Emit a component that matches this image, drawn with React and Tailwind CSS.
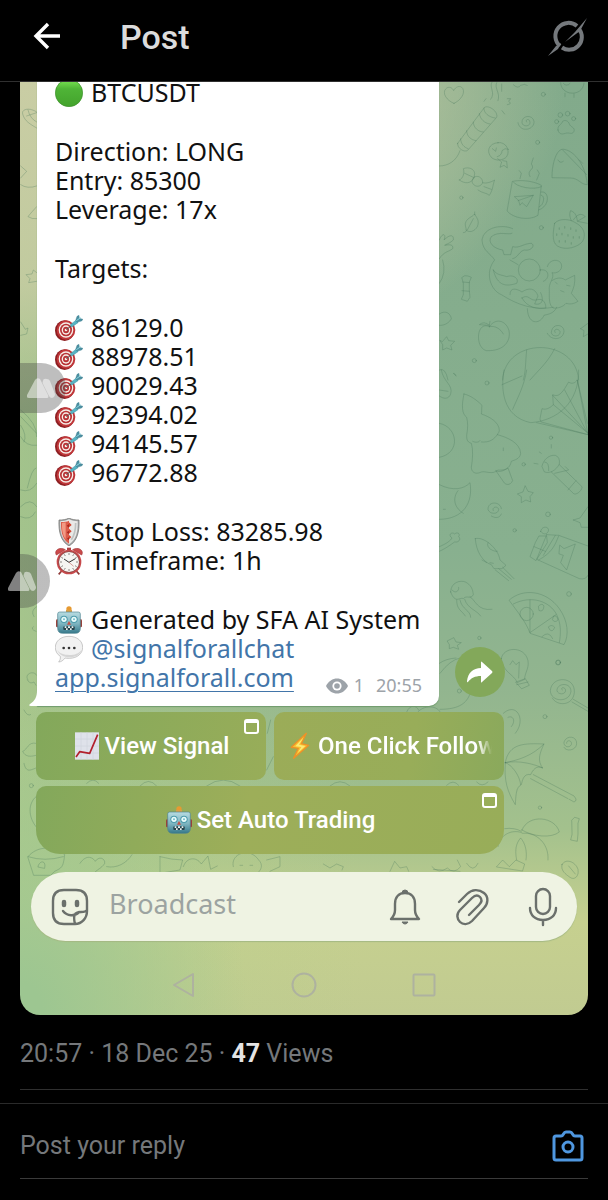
import { useState } from "react";

function GreenCircle() {
  return (
    <svg viewBox="0 0 84 84" className="size-7 shrink-0" aria-hidden="true">
      <defs>
        <linearGradient id="green" x1="0" y1="0" x2="0" y2="1">
          <stop offset="0" stopColor="#7ce854" />
          <stop offset="0.35" stopColor="#4fb437" />
          <stop offset="1" stopColor="#43a32c" />
        </linearGradient>
      </defs>
      <circle cx="42" cy="42" r="41" fill="url(#green)" stroke="#3d8f2b" strokeWidth="2" />
    </svg>
  );
}

function Dart() {
  return (
    <svg viewBox="0 0 84 84" className="size-7 shrink-0" aria-hidden="true">
      <ellipse cx="29" cy="50" rx="29" ry="31" fill="#8e1f22" />
      <ellipse cx="33" cy="48" rx="28" ry="29" fill="#c0373a" />
      <ellipse cx="33" cy="48" rx="22" ry="23" fill="#f7efe9" />
      <ellipse cx="33" cy="48" rx="18" ry="19" fill="#b93336" />
      <ellipse cx="33" cy="48" rx="13" ry="14" fill="#f7efe9" />
      <ellipse cx="33" cy="48" rx="9" ry="10" fill="#b93336" />
      <circle cx="33" cy="48" r="4" fill="#f7efe9" />
      <path d="M34 47 52 33" stroke="#555" strokeWidth="3" />
      <path d="M46 32 64 18l5 8-19 13z" fill="#58b4c4" stroke="#3990a2" strokeWidth="1.5" />
      <path d="M62 19 66 7l6-3 1 9 11 3-4 5-14 4z" fill="#4d8fa2" stroke="#347b8d" />
      <path d="m64 20 13-9" stroke="#8bd9e2" strokeWidth="3" />
    </svg>
  );
}

function Shield() {
  return (
    <svg viewBox="0 0 84 84" className="size-7 shrink-0" aria-hidden="true">
      <path d="M12 6c12 0 21-1 30-6 9 5 18 6 30 6 2 36-6 64-30 78C18 70 10 42 12 6z" fill="#a6a9aa" />
      <path d="M16 10c11 0 18-2 26-6 8 4 15 6 26 6 1 32-5 56-26 69C21 66 15 42 16 10z" fill="#e9e9e7" />
      <path d="M18 12c10 0 17-1 24-4v69C23 65 17 42 18 12z" fill="#dc5c4a" />
      <path d="M21 15c6 0 8-1 11-2v50C23 52 20 35 21 15z" fill="#f29a84" />
      <path d="M42 13l8 8-8 7zM42 32l8 8-8 7zM42 51l7 6-7 7z" fill="#d2442f" />
      <path d="M42 18l-7 5 7 6zM42 38l-7 5 7 6zM42 57l-6 5 6 5z" fill="#a92a20" />
      <path d="M62 15c0 22-5 39-13 50" fill="none" stroke="#bfc3c2" strokeWidth="5" />
      <path d="M12 6c12 0 21-1 30-6 9 5 18 6 30 6 2 36-6 64-30 78C18 70 10 42 12 6z" fill="none" stroke="#6d6b68" strokeWidth="2" />
    </svg>
  );
}

function AlarmClock() {
  return (
    <svg viewBox="0 0 84 84" className="size-7 shrink-0" aria-hidden="true">
      <path d="m20 72-9 10M64 72l9 10" stroke="#8f3a38" strokeWidth="5" />
      <path d="M4 24C-4 10 14-2 31 8zM80 24C88 10 70-2 53 8z" fill="#cb4a4b" stroke="#a23638" strokeWidth="2" />
      <path d="M36 2h12v8H36z" fill="#ae4041" />
      <circle cx="42" cy="45" r="37" fill="#c7494b" />
      <circle cx="42" cy="45" r="32" fill="#8d4a48" />
      <circle cx="42" cy="45" r="30" fill="#f6f5f2" />
      <path d="M42 18v6M42 66v6M15 45h6M63 45h6M28 22l3 5M56 22l-3 5M28 68l3-5M56 68l-3-5M19 31l5 3M65 31l-5 3M19 59l5-3M65 59l-5-3" stroke="#55504d" strokeWidth="2" />
      <path d="M27 36l15 10 19-11" fill="none" stroke="#333" strokeWidth="3" />
      <path d="m42 46 14 12" stroke="#b5433c" strokeWidth="1.5" />
    </svg>
  );
}

function Robot() {
  return (
    <svg viewBox="0 0 84 84" className="size-7 shrink-0" aria-hidden="true">
      <defs>
        <linearGradient id="robot" x1="0" y1="0" x2="0" y2="1">
          <stop offset="0" stopColor="#b7dce2" />
          <stop offset="0.55" stopColor="#7db4c0" />
          <stop offset="1" stopColor="#35788a" />
        </linearGradient>
      </defs>
      <circle cx="42" cy="9" r="8" fill="#e69a32" />
      <path d="M33 12h18v7H33z" fill="#d8a04a" />
      <rect x="3" y="40" width="9" height="24" rx="4" fill="#96423b" />
      <rect x="72" y="40" width="9" height="24" rx="4" fill="#96423b" />
      <path d="M14 18h56q6 0 6 6v43q0 15-15 15H23Q8 82 8 67V24q0-6 6-6z" fill="url(#robot)" stroke="#4f8390" strokeWidth="2" />
      <circle cx="27" cy="40" r="11" fill="#4c9aab" />
      <circle cx="57" cy="40" r="11" fill="#4c9aab" />
      <circle cx="27" cy="40" r="8" fill="#e9fbfb" />
      <circle cx="57" cy="40" r="8" fill="#e9fbfb" />
      <circle cx="27" cy="40" r="3" fill="#74bfcb" />
      <circle cx="57" cy="40" r="3" fill="#74bfcb" />
      <path d="m42 45 6 11H36z" fill="#c64e43" />
      <rect x="25" y="61" width="34" height="11" rx="3" fill="#24434c" />
      <path d="M29 61h5v5h-5zM39 61h6v5h-6zM50 61h5v5h-5zM33 67h5v5h-5zM45 67h5v5h-5z" fill="#eef4f3" />
    </svg>
  );
}

function SpeechBubble() {
  return (
    <svg viewBox="0 0 84 84" className="size-7 shrink-0" aria-hidden="true">
      <path d="M42 4c24 0 41 14 41 33S66 70 43 70c-6 0-9 0-13-1-5 7-12 12-19 12 4-5 6-10 5-17C6 58 1 48 1 37 1 18 18 4 42 4z" fill="#f1f1f1" stroke="#b0b0b0" strokeWidth="2" />
      <path d="M7 46c6 14 20 21 36 21 19 0 33-8 37-22-9 11-20 15-37 15S15 56 7 46z" fill="#d5d5d5" />
      <circle cx="26" cy="39" r="4" fill="#333" />
      <circle cx="42" cy="39" r="4" fill="#333" />
      <circle cx="58" cy="39" r="4" fill="#333" />
    </svg>
  );
}

function Chart() {
  return (
    <svg viewBox="0 0 84 84" className="size-7 shrink-0" aria-hidden="true">
      <path d="M6 1h72v82H6z" fill="#dfe2ea" />
      <path d="M24 1v82M42 1v82M60 1v82M6 21h72M6 42h72M6 63h72" stroke="#d0d4dd" strokeWidth="2" />
      <path d="m9 75 11-16 30 5L74 8" fill="none" stroke="#b2202c" strokeWidth="5" strokeLinejoin="round" />
    </svg>
  );
}

function Bolt() {
  return (
    <svg viewBox="0 0 84 84" className="size-7 shrink-0" aria-hidden="true">
      <path d="M61 4 16 46l21 3-14 30 45-39-22-5z" fill="#f7c331" stroke="#ee9128" strokeWidth="4" strokeLinejoin="round" />
      <path d="M52 17 28 43l18 2-11 18 23-21-19-4z" fill="#fdea76" />
    </svg>
  );
}

function WindowMark() {
  return (
    <svg viewBox="0 0 15 15" className="absolute right-[7px] top-[7px] size-[15px]" aria-hidden="true">
      <rect x="1" y="1" width="13" height="13" rx="2" fill="none" stroke="#fff" strokeWidth="2" />
      <path d="M1 1h13v3H1z" fill="#fff" />
    </svg>
  );
}

function Peaks() {
  return (
    <svg viewBox="0 0 28 20" className="h-5 w-7 shrink-0" fill="#fff" fillOpacity="0.5" aria-hidden="true">
      <path d="M8 2q2-3 5-1l8 16q1 3-1 3H2q-3 0-2-3z" />
      <path d="M16 3q0-3 4-2 2 0 3 2l5 13q0 3-3 4-2 0-3-2L16 6q-1-2 0-3z" />
    </svg>
  );
}

// Line art of the chat wallpaper, one group per area
function Doodles() {
  return (
    <svg
      viewBox="20 82 568 933"
      preserveAspectRatio="xMaxYMin slice"
      className="absolute inset-0 size-full"
      fill="none"
      stroke="#47775a"
      strokeOpacity="0.3"
      strokeWidth="3"
      strokeLinecap="round"
      strokeLinejoin="round"
      aria-hidden="true"
    >
      <g transform="translate(430 80) scale(0.3333)">
        <path d="M72 70C50 62 36 40 47 27c9-10 20-4 24 5 6-13 20-17 27-7 9 15-7 37-26 45z" />
        <path d="M83 190 162 84c8-12 44 8 38 28l-86 98c-10 10-34-6-31-20zM162 84c-2 14 14 28 34 30M148 100c2 18 16 30 32 32M130 126c0 18 16 30 30 30M110 152c0 18 14 28 28 30M92 176c0 16 10 26 22 30M90 212c-10 30-34 46-62 46" />
        <path d="M186 6c-10 16 12 32-4 52M200 8c-8 18 12 30 4 54M168 56l-6 8M232 56h10l-6 8q12 8-4 10M216 92l8 10M215 12l0 22M250 14q14 14 22 2 12-6 20 0" />
        <path d="M290 126c-6-8 8-12 10 0 2 14-22 16-24 2-2-22 32-26 36-4 2 26-42 36-48 4" />
        <path d="M384 150c-2-16 10-14 14-26 8-6 18 0 20 8 4 10 18 10 14 22-6 12-14 2-26 6-10 4-20 2-22-10z" />
        <circle cx="380" cy="125" r="6" /><circle cx="391" cy="105" r="7" /><circle cx="413" cy="101" r="7" /><circle cx="431" cy="116" r="6" />
        <circle cx="340" cy="43" r="6" /><circle cx="323" cy="187" r="6" /><circle cx="94" cy="353" r="5" /><circle cx="334" cy="443" r="6" /><circle cx="133" cy="842" r="6" />
        <path d="M392 8c0 40 66 44 70 2M405 40v10M432 42v10M400 10q10 12 20 0" />
        <path d="M204 188c24-4 38 24 26 42-10 12-34 14-46 2-16-18-8-42 20-44zM203 236l12 10-5 16 12-6 10 8-2-20-12-2M187 206l10 8 2-10M202 230q14-4 14-18 8-10 20-4" />
        <path d="M366 292c0-40 12-80 30-84 30-2 70 40 76 106-20 0-26-20-50-20zM398 210l72 74M384 240q6 12 16 4M448 240l10 10" />
        <path d="M88 300c12-4 16-22 12-34 16-6 32 0 34 14l-2 14c-10 18-28 18-44 6zM132 292c10-8 26 0 26 16-4 10-16 14-24 8-10-6-10-18-2-24zM158 308c10 4 26-2 36-8-6 14-4 28-16 46-8-8-22-6-34-16M104 280l26 12M162 320l22 8" />
        <path d="M248 304c26-6 66 0 86 12l-10 90c-28 18-76 8-92-12zM250 306c8 14 60 26 84 14M334 336c26-4 26 44-8 54M334 346c12 0 8 30-6 34M270 296l4-16-6-8M300 290c-12-22 18-20 4-38l6-18M320 300l8-20-6-10" />
        <path d="M254 350l56-4-20 34-14-12-6 8-4-14zM310 346l-46 16" />
        <path d="M100 458c18-2 4-14 6-28 4-16 20-18 28-28 4 10 16 18 8 38-8 14-24 20-34 10M130 416l-18 34M134 404v-8" />
        <path d="M374 430c12-16 44-14 62-2 24 12 34 34 22 56-12 16-50 30-76 14-18-12-12-48-8-68zM424 422c-8-18-4-24-2-30 16 6 18 18 20 30M430 420c12-18 24-22 36-10l-24 14 30 6" />
        <path d="M388 444v4M404 440v4M422 444v4M438 450v4M380 462v4M396 460v4M414 464v4M430 470v4M448 470v4M388 482v4M406 482v4M424 488v4" strokeWidth="4" />
        <path d="M246 460c-10 6-40-8-62 10-12 16 6 36 34 40l4 14 20 0 6-24c20 6 34-10 56-10 14 8-4 24-20 20-16 2-20 24-36 26M248 446c-30-14-86-6-92 34 2 34 26 40 38 60-30 36-14 90 20 104 50 32 100 48 156 38" />
        <circle cx="298" cy="570" r="33" />
        <path d="M190 570c10 16 24 14 40 20 22-8 38 8 30 20-30 10-58 10-70-40zM240 644c0-24 20-18 36-8 20-14 40-12 48 12l-10 24c20 4 30-8 18-34M240 540l24 14M276 654c20-14 24 10 42 6 20-6 28 4 30 24-24 4-56 0-72-30zM292 686c2 52 40 46 50 20 16-4 30-6 38-24M352 560c6-24 36-24 42-8 6 20-16 30-28 26 10 16-12 30-8 54 0 20-2 44 12 52 14 2 30-4 38-14 12 4 24 2 36-6l-20-24c8-18 12-30 10-54l-28 14c-14-10-28-6-40 2M376 606l6 6M392 632l10 4M410 616l10 2M330 570c30-6 30 28 10 34" />
        <path d="M178 740c-40-20-44 66-8 72 54 2 70-30 68-54-4-32-38-50-60-18zM178 740c16-4 34 6 42 22M178 736l-30-2q14-12 30 2l2-12" />
        <path d="M376 758c-8-8 6-16 14-4 2 18-24 18-26 4 2-30 38-26 38-4-2 26-38 30-50 6" />
        <path d="M38 784l12-14 6 12 18 2-12 12 4 14-16-6-12 6v-16l-8-12zM452 746l22-16M452 746l10 6-2 18 14-8" />
        <path d="M218 900c6-130 220-130 228 0M290 810c-4 40-2 60-10 90M374 806c-20 40-44 60-74 94" />
        <path d="M96 592q8-8 18-4l10 4-6 14v26l2 20-8 12-18-6 6-14 0-34zM98 606l20 2M96 632l22 2" />
        <path d="M28 480c10-26 22-16 14 0 18-18 30-16 28 0-10 10-20 12-26 16 20-4 26 0 24 10-12 10-26 8-40 30M38 540q12 40-10 70M28 702c20-14 34 0 36 14-4 10-20 22-36 20" />
        <path d="M28 870q18-10 26 30M70 880l8 6" />
      </g>
      <g transform="translate(430 370) scale(0.3333)">
        <path d="M222 0c-10 54-6 140 80 158 80-6 146-60 144-158M290 0c-8 50-26 80-42 118M216 44l60-26M330 146l6-30c10 4 22 0 34-12l-2-30c14 6 22 2 36-18l12-20c10 8 20 2 26-6l32 164-140-38zM370 104l104 86M368 76l106 114M404 60l66 124M442 30l30 130M320 158l154 36" />
        <path d="M102 72c20 4 40 20 54 34-2 12 0 20-2 26 24 8 54 24 54 50-2 10-6 8-6 12 30 8 68 24 70 56-2 18-20 20-28 24-4 24-24 28-40 26-18 16-36 2-50 6-20 10-30-2-30-14 4-24 6-54 0-72-14-4-14-14-14-24 4-24 4-36 0-54-14-10-16-34-8-70zM128 214c8 4 18 4 22-2M154 216c26 2 38-8 48-22" />
        <path d="M198 302c12 8 30-4 36-8l14 38c-8 16-20 12-24 8zM220 234v8" />
        <path d="M336 288c4-18 20-34 40-32 10 4 14 12 12 26-10 20-30 30-44 24zM344 276q14 0 12 26M388 284l68 66c2 8-12 24-24 22l-68-66M406 290l10 10-42 10M438 332l-24 28M328 246l6 4M364 224v10M312 280l12 2" />
        <path d="M286 348l8 16 16 4-10 12 2 16-14-6-14 8v-18l-12-8 16-6z" />
        <path d="M190 422c-6-10 12-16 16-4 0 16-28 16-32 0 0-26 38-24 40-2M184 438c12 8 26 6 30-6" />
        <path d="M28 344c40 20 74 14 92-6 10 60-20 110-92 110M84 362c-16 20-14 50 16 68M40 418h6" />
        <path d="M28 160c56 10 66 90 0 102M34 0c6 36 36 44 28 72-6 16-20 16-34 6M28 60l26 4M72 10l6 8" />
        <path d="M28 530c20-8 34-18 38-26-14-10 0-20 8-12 8-8 18 0 12 8 8 8 0 18-12 16-10 6-20 16-46 28" />
        <path d="M136 506c22-8 68 26 74 64l18 16-12 10-24 0-8-12c-26-8-46-40-48-78zM174 518c-8 16 18 28 28 26M156 570l14 8M180 578l10 2M196 600l40 32M206 596l38 32M218 592l34 34" />
        <path d="M350 494l36 2 88 32M350 494l-30 74 128 58q20 4 26-10M386 498c-12 30-20 50-60 72M376 496l-36 60M328 498l22 0 2 20-34 54-18-12 16-42zM312 530l34 14M332 484c4-20 30-14 22 2-6 8-14 8-22-2zM390 526l12 10 34-14-26 78-18-22 8-22-12-4z" />
        <path d="M62 666c0-30 30-36 44-30 16 8 22 20 24 38-8 16-20 0-30 12-10-6-24 18-38-20zM66 660c10 12 22 4 20-8M80 690c0 30 14 30 26 48M90 690c6 30 32 30 32 52M104 688c8 28 36 32 48 50M120 680c16 10 22 44 66 38" />
        <path d="M238 690c40-36 110-30 150 26 26 36 30 80 14 108l-102-34c-10-30-34-60-50-82zM250 702c54-28 110-8 130 32 12 24 14 52 8 84M300 690v98l78-54" />
        <circle cx="290" cy="732" r="20" /><path d="M326 708q10-10 16 0-2 20-14 14zM356 770q10-8 18 2-6 16-14 8zM372 738q10-2 12 12-10 10-16 0zM336 800q20-20 32 6" />
        <path d="M72 804l6 12 16 2-12 8 4 12-16-6-12 4 0-12-6-10zM28 880q20-14 50-16" />
        <circle cx="171" cy="39" r="6" /><circle cx="363" cy="203" r="5" /><circle cx="281" cy="283" r="5" /><circle cx="354" cy="433" r="7" /><circle cx="254" cy="481" r="5" /><circle cx="417" cy="672" r="7" /><circle cx="148" cy="804" r="5" /><circle cx="385" cy="877" r="7" />
        <path d="M430 450l20-6 24-34M430 450l20 8 4 14 20 0" />
      </g>
      <g transform="translate(300 600) scale(0.3333)">
        <path d="M604 176c4-36 70-40 80 6 4 24-10 36-10 56l-22 10c-10-26-44-30-48-72zM630 194l8-12 10 12 10-8-2 48M648 246l28-10 12 20-22 10zM650 254l34-8" />
        <path d="M787 270c-8-6 6-12 10 0 0 16-24 14-26 2 0-24 42-26 42 2-4 34-60 34-62-2 4-46 76-44 72 6-4 40-52 42-66 16M820 298l44 26M816 306l48 28" />
        <path d="M800 430c-2-12 18-10 14 4-6 12-24 6-22-8 8-22 40-18 38 6-2 20-32 24-38 10M610 340c40-36 70 20 36 60M624 352c16-8 24 12 10 28" />
        <path d="M616 488c10-60 60-58 116-56-14 30-20 50-4 72-20-10-30 8-36 20-20-4-24 14-28 30-16 8-16 30-18 60-24-40-34-70-30-126zM616 488c40-8 80-20 116-56M616 488c40-8 86 4 112 16M616 488c20 6 44 40 46 66M700 524l122 64q12 14 0 18l-14-8M692 536l112 60" />
        <path d="M666 690c20-50 100-40 112 6-24 20-80 14-112-6zM594 740c10-50 60-50 74-40 40-4 80 30 76 80M650 780c-6-30-2-50 12-66 14 16 20 40 16 66M614 686q30-4 50 8M816 660l8-8 14 4-4 14v32l-2 22-20-4 4-16z" />
        <path d="M420 220q30-40 60-46M420 328c60 0 80-20 90-46M350 340c20-28 66-24 72 0M320 336c10-24 30-20 36-6M90 558q30-26 60 0M440 556q20-20 36 0M530 546q16 18 34 0" />
        <circle cx="774" cy="188" r="7" /><circle cx="735" cy="350" r="6" /><circle cx="720" cy="623" r="5" /><circle cx="478" cy="273" r="6" />
      </g>
      <g transform="translate(20 700) scale(0.3333)">
        <path d="M12 30q10 20 20 14M48 130c-24-6-26 20-40 24 8 18 24 16 40 12M12 190c6 30 20 20 36 14M48 290c-24 20-24 60 0 90M24 470c30-36 80-30 110-6-4 40-10 40-30 50l-12 12H42zM24 470q50 16 106 0M54 500c4-20 26-20 20 4zM180 490c20-30 40-16 46-6 10-16 30-10 28 6-8 16-30 20-40 40M260 500c30 6 60-10 76-36M420 470v50l60-10 8-30q-30 0-68-10M490 500c10-30 40-30 54-8l20-24 8 40 20-10M640 500c-10-40 50-60 76-20 14 14 8 28 0 36M660 496h8M690 496h8M740 480l40-10 0 30-30 14M200 250q20-20 36 0M360 258q26-28 50 0M560 258q50-36 100 0M760 170l-20 40M752 60l-10 40" />
        <circle cx="34" cy="257" r="6" />
      </g>
      <g transform="translate(300 860) scale(0.3333)">
        <path d="M70 12l20 12 20-12 20 8-4 10M270 34l14-30 16 20 20-4 6 14M396 20q20 24 46 4 20 20 40-4l-10-20M400 28l80 6M500 10q20 30 34 0M590 20l18-20 20 20 20-20 26 12-6 20zM786 14c10-20 40-10 48 14 4 20-10 34-24 24s-28-20-24-38zM806 18l20 24" />
      </g>
      <g transform="translate(0 80) scale(0.3333)">
        <path d="M110 96c-20-14-46-10-42 6 6 22 22 30 42 42M80 108l30-10M84 90q6 26 26 36M62 258l18 16-18 20M62 314q20 14 48 4M110 380q-20 22-26 30 12 8 26 6M110 578l-10-8-4 12-18 2 12 12-4 12 24-4" />
      </g>
      <g transform="translate(0 300) scale(0.3333)">
        <path d="M62 66l14 22 8-4-4 18-18 4M62 330q50 40 48 80M62 350l48 50M62 410q16 30 48 26M62 376q20 30 10 50M108 504q-12 0-26 60M62 570q30 10 48-20" />
      </g>
      <g transform="translate(0 500) scale(0.3333)">
        <path d="M62 20q30-30 48 0M62 50q30 14 44-14M110 320q-20 12-8 30M100 380q-10 8 8 14M84 540c-14-20 20-30 26-14M82 540q8 14 20 6l6 10" />
      </g>
    </svg>
  );
}

const targets = ["86129.0", "88978.51", "90029.43", "92394.02", "94145.57", "96772.88"];

function Line({ icon, children }) {
  return (
    <p className="flex items-end gap-2">
      {icon}
      <span>{children}</span>
    </p>
  );
}

export default function App() {
  const [message, setMessage] = useState("");
  const [reply, setReply] = useState("");

  return (
    <div className="min-h-[1200px] bg-black font-['Roboto',sans-serif]">
      <header className="flex h-[82px] items-center border-b border-[#303030] px-5 pb-2">
        <button aria-label="Back" className="ml-3 w-[88px]">
          <svg viewBox="0 0 30 30" className="size-[30px]" fill="none" stroke="#fff" strokeWidth="3.4">
            <path d="M28 14H4M16 2 4 14l12 12" />
          </svg>
        </button>
        <h1 className="text-[34px] leading-10 font-medium text-[#dcdcdc]">Post</h1>
        <button aria-label="Grok" className="ml-auto">
          <svg viewBox="0 0 40 38" className="h-[38px] w-10" fill="none" stroke="#75797d" strokeWidth="4">
            <path d="M12 28A12.7 12.7 0 0 1 29 8M31 11A12.7 12.7 0 0 1 14 29.500" />
            <path d="M39 0 32 13 17 24 27 14zM13 25l-3 6L0 38l8-10z" fill="#75797d" stroke="none" />
          </svg>
        </button>
      </header>

      <div className="relative mx-5">
        <section className="relative overflow-hidden rounded-b-[20px] bg-[radial-gradient(40%_34%_at_0%_100%,#9dc691_10%,#9dc69100_100%),radial-gradient(96%_36%_at_0%_0%,#c9cda4_0%,#c9cda4cc_60%,#c9cda400_100%),linear-gradient(90deg,#b5d08a99_0%,#b5d08a00_60%),linear-gradient(180deg,#82aa8b_0%,#88b08f_50%,#92b58f_65%,#a3c18d_80%,#c6d08f_90%,#c1cb91_100%)]">
          <Doodles />

          <div className="relative flex items-end gap-4 pl-[17px]">
            <article className="relative -mt-1 flex w-[402px] flex-col gap-[30px] rounded-br-[10px] bg-white pb-[14px] pl-[18px] pr-[17px] font-['Noto_Sans',sans-serif] text-[25px] leading-[29px] text-[#111] shadow-[0_1px_1px_#6f9b6c]">
              <Line icon={<GreenCircle />}>BTCUSDT</Line>
              <div>
                <p>Direction: LONG</p>
                <p>Entry: 85300</p>
                <p>Leverage: 17x</p>
              </div>
              <p>Targets:</p>
              <div>
                {targets.map((t) => (
                  <Line key={t} icon={<Dart />}>{t}</Line>
                ))}
              </div>
              <div>
                <Line icon={<Shield />}>Stop Loss: 83285.98</Line>
                <Line icon={<AlarmClock />}>Timeframe: 1h</Line>
              </div>
              <div>
                <Line icon={<Robot />}>Generated by SFA AI System</Line>
                <Line icon={<SpeechBubble />}>
                  <a href="#chat" className="text-[#4275a9]">@signalforallchat</a>
                </Line>
                <div className="flex items-end justify-between">
                  <a href="#app" className="text-[#4275a9] underline decoration-1 underline-offset-4">app.signalforall.com</a>
                  <p className="-mb-2 flex items-center text-[18px] text-[#9da3a9]">
                    <svg viewBox="0 0 22 16" className="mr-[6px] h-4 w-[22px]" aria-hidden="true">
                      <path d="M0 8C5-2 17-2 22 8 17 18 5 18 0 8z" fill="#9da3a9" />
                      <circle cx="11" cy="8" r="4.6" fill="#fff" />
                      <circle cx="11" cy="8" r="2.8" fill="#9da3a9" />
                    </svg>
                    <span className="mr-3">1</span>
                    <time>20:55</time>
                  </p>
                </div>
              </div>
              <svg viewBox="0 0 9 16" className="absolute -left-2 bottom-0 h-4 w-[9px]" fill="#fff" aria-hidden="true">
                <path d="M9 0H8C8 7 6 11 1 14q-2 2 1 2h7z" />
              </svg>
            </article>
            <button aria-label="Share" className="mb-[9px] flex size-[50px] items-center justify-center rounded-full bg-[#83a85a]">
              <svg viewBox="0 0 26 22" className="h-[22px] w-[26px]" fill="#fff">
                <path d="M14 1q0-1 1 0l10 9q1 1 0 2l-10 9q-1 1-1 0v-6C8 15 4 17 1 21q-1 1-1-1C1 12 6 7 14 7z" />
              </svg>
            </button>
          </div>

          <div className="relative ml-4 mt-[6px] grid w-[468px] grid-cols-2 gap-x-2 gap-y-[6px] text-[24px] font-medium text-white">
            <button className="relative flex h-[68px] items-center justify-center gap-1 rounded-[10px] bg-[linear-gradient(100deg,#83a85b,#98ad59)]">
              <Chart />
              View Signal
              <WindowMark />
            </button>
            <button className="flex h-[68px] items-center gap-1 overflow-hidden rounded-[10px] bg-[linear-gradient(100deg,#9bac58,#98ad59_60%,#8aa95c)] pl-3 pr-[12px]">
              <Bolt />
              <span className="overflow-hidden whitespace-nowrap [mask-image:linear-gradient(90deg,#000_92%,transparent)]">One Click Follow</span>
            </button>
            <button className="relative col-span-2 flex h-[68px] items-center justify-center gap-1 rounded-[10px] rounded-b-[24px] bg-[linear-gradient(100deg,#83a85b,#9dae59_45%,#98ad59)]">
              <Robot />
              Set Auto Trading
              <WindowMark />
            </button>
          </div>

          <form className="relative mx-[11px] mt-[18px] flex h-[69px] items-center rounded-full bg-[#eff3e3] pl-5 pr-4 shadow-[0_1px_1px_#a5b983]" onSubmit={(e) => e.preventDefault()}>
            <button type="button" aria-label="Stickers">
              <svg viewBox="0 0 38 38" className="size-[38px]" fill="none" stroke="#6b706c" strokeWidth="2.4" strokeLinecap="round" strokeLinejoin="round">
                <path d="M24 36H13Q2 36 2 25V13Q2 2 13 2h12q11 0 11 11v10c0 7-5 13-12 13zM24 36c-2-8-1-12 6-12 3 0 5 0 6-2M12 23c4 5 12 6 16 1" />
                <path d="M13 14v3M26 14v3" strokeWidth="4.5" />
              </svg>
            </button>
            <input
              aria-label="Broadcast"
              placeholder="Broadcast"
              value={message}
              onChange={(e) => setMessage(e.target.value)}
              className="ml-5 h-10 min-w-0 flex-1 bg-transparent pb-1 font-['Noto_Sans',sans-serif] text-[27px] text-[#333] outline-none placeholder:text-[#9ca3a1]"
            />
            <div className="flex items-center gap-[34px]">
              <button type="button" aria-label="Notifications">
                <svg viewBox="0 0 32 38" className="h-[38px] w-8" fill="none" stroke="#6b706c" strokeWidth="2.4" strokeLinejoin="round">
                  <path d="M2 31c3-3 4-5 4-9v-6C6 9 10 5 16 5s10 4 10 11v6c0 4 1 6 4 9z" />
                  <path d="M13 5q0-3 3-3t3 3zM13 34h6q-1 2-3 2t-3-2z" fill="#6b706c" strokeWidth="1" />
                </svg>
              </button>
              <button type="button" aria-label="Attach">
                <svg viewBox="0 0 36 38" className="h-[38px] w-9" fill="none" stroke="#6b706c" strokeWidth="2.4" strokeLinecap="round">
                  <path d="M4 14 12 6c5-5 12-5 17-1s4 11 0 15L17 33c-4 4-9 4-12 1s-4-8 0-12l12-12c3-3 6-3 8-1s2 5-1 8L14 27" />
                </svg>
              </button>
              <button type="button" aria-label="Voice message">
                <svg viewBox="0 0 36 40" className="h-10 w-9" fill="none" stroke="#6b706c" strokeWidth="2.4" strokeLinecap="round">
                  <rect x="11" y="2" width="14" height="25" rx="7" />
                  <path d="M5 21c0 7 5 12 13 12s13-5 13-12M18 33v5" />
                </svg>
              </button>
            </div>
          </form>

          <nav className="relative flex h-[74px] items-center justify-center gap-[94px] pt-[14px]">
            <button aria-label="Back">
              <svg viewBox="0 0 26 26" className="size-[26px]" fill="none" stroke="#aeb29f" strokeWidth="2">
                <path d="M22 2v22L3 13z" strokeLinejoin="round" />
              </svg>
            </button>
            <button aria-label="Home">
              <svg viewBox="0 0 26 26" className="size-[26px]" fill="none" stroke="#aeb29f" strokeWidth="2">
                <circle cx="13" cy="13" r="11.5" />
              </svg>
            </button>
            <button aria-label="Recent apps">
              <svg viewBox="0 0 26 26" className="size-[26px]" fill="none" stroke="#aeb29f" strokeWidth="2">
                <rect x="2.5" y="2.5" width="21" height="21" rx="1" />
              </svg>
            </button>
          </nav>
        </section>

        {/* floating bubbles that lie over the chat edge */}
        <div className="absolute left-0 top-[281px] flex h-[50px] w-[46px] items-center rounded-r-full bg-[#444]/35 pl-[7px]">
          <Peaks />
        </div>
        <div className="absolute -left-3 top-[472px] flex h-[54px] w-[42px] items-center rounded-r-full bg-[linear-gradient(90deg,transparent_12px,#44444459_12px)]">
          <Peaks />
        </div>
      </div>

      <p className="mx-5 border-b border-[#2f2f2f] pb-[19px] pt-[23px] text-[25px] leading-8 text-[#75787b]">
        20:57 · 18 Dec 25 · <b className="font-bold text-[#e4e4e4]">47</b> Views
      </p>

      <footer className="mt-[13px] border-t border-[#2a2a2a] px-5">
        <div className="flex h-[75px] items-center border-b border-[#3a3a3a] pt-[10px]">
          <input
            aria-label="Post your reply"
            placeholder="Post your reply"
            value={reply}
            onChange={(e) => setReply(e.target.value)}
            className="min-w-0 flex-1 bg-transparent text-[25px] text-white outline-none placeholder:text-[#75787b]"
          />
          <button aria-label="Add photo" className="mr-1">
            <svg viewBox="0 0 32 32" className="size-8" fill="none" stroke="#4f97e0" strokeWidth="3" strokeLinejoin="round">
              <path d="M4 6h5c3 0 2-4 5-4h4c3 0 2 4 5 4h5q2 0 2 2v20q0 2-2 2H4q-2 0-2-2V8q0-2 2-2z" />
              <circle cx="16" cy="17" r="5" />
            </svg>
          </button>
        </div>
      </footer>
    </div>
  );
}
